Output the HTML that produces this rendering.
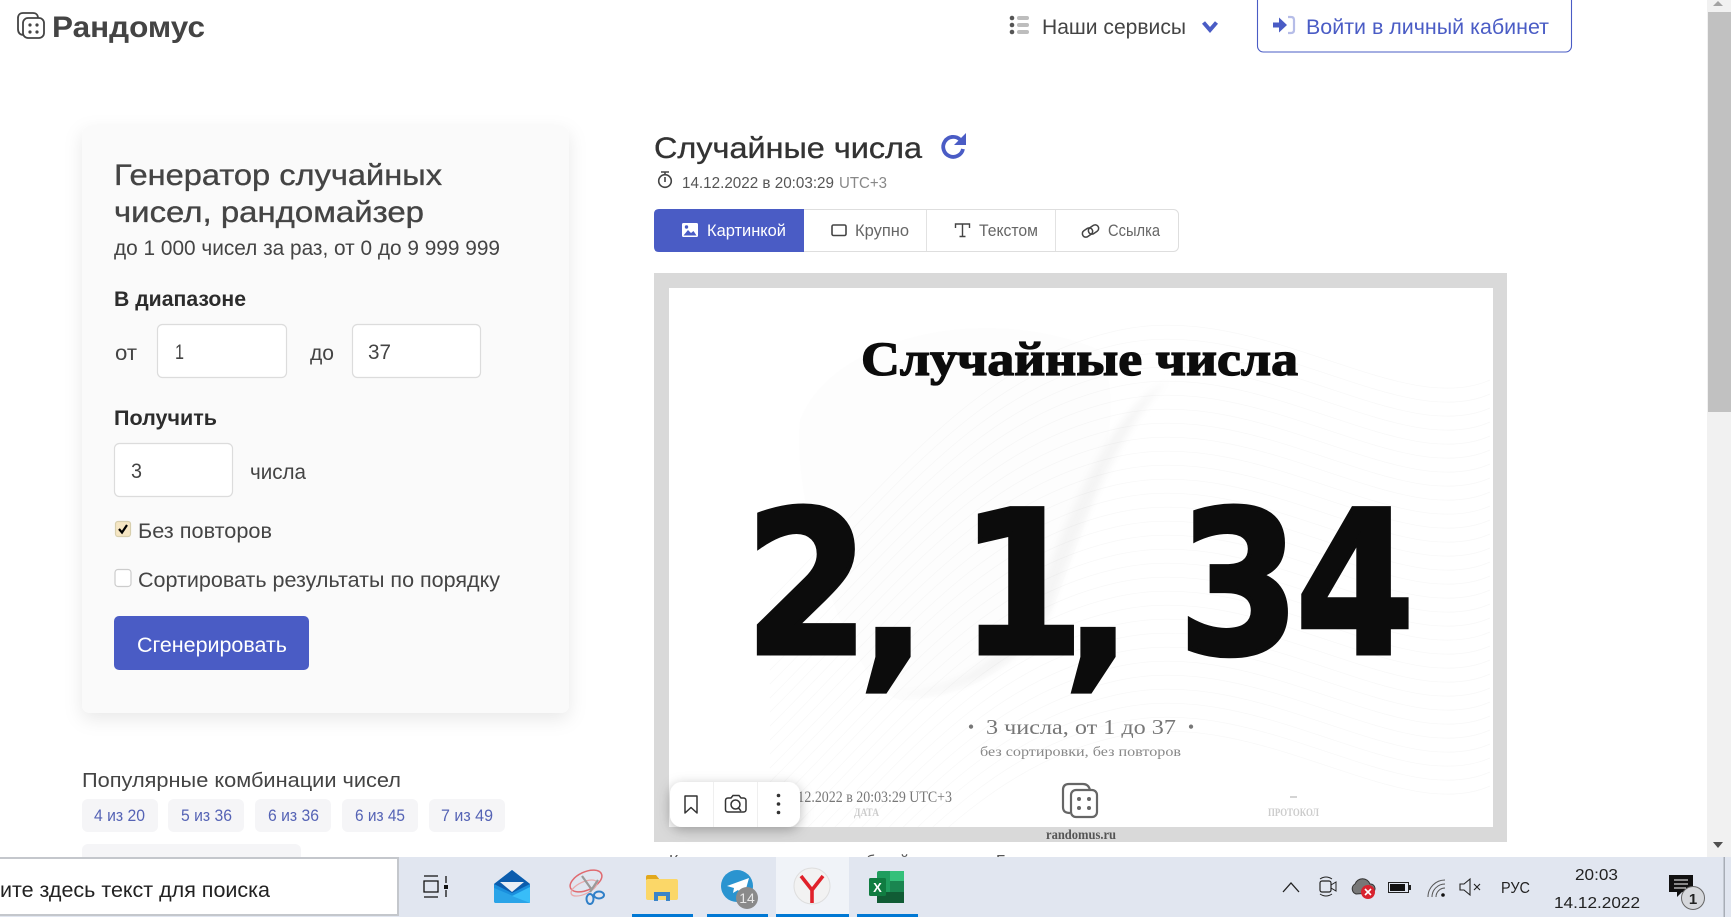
<!DOCTYPE html>
<html lang="ru">
<head>
<meta charset="utf-8">
<title>Рандомус</title>
<style>
html,body{margin:0;padding:0;width:1731px;height:917px;overflow:hidden;background:#fff}
#w{position:relative;width:1731px;height:917px;overflow:hidden}
svg{display:block;position:absolute;left:0;top:0}
text{font-family:"Liberation Sans",sans-serif;fill:#444;font-size:21px;white-space:pre}
.b{font-weight:700}
.h{stroke:#444;stroke-width:.35px}
.sl{font-family:"Liberation Serif",serif;font-weight:700;fill:#0c0c0c;stroke:#0c0c0c;stroke-width:1.300px}
.dg{font-family:"DejaVu Sans",sans-serif;font-weight:700;fill:#0c0c0c;font-size:198px;stroke:#0c0c0c;stroke-width:5px}
.cm{font-family:"DejaVu Sans",sans-serif;font-weight:700;fill:#0c0c0c;font-size:211px}
.sr{font-family:"Liberation Serif",serif}
</style>
</head>
<body>
<div id="w">
<svg width="1731" height="917" viewBox="0 0 1731 917" xmlns="http://www.w3.org/2000/svg">
<defs>
<filter id="sh" x="-15%" y="-15%" width="130%" height="130%"><feDropShadow dx="0" dy="6" stdDeviation="9" flood-color="#000" flood-opacity=".09"/></filter>
<filter id="sh2" x="-20%" y="-30%" width="140%" height="170%"><feDropShadow dx="0" dy="3" stdDeviation="6" flood-color="#000" flood-opacity=".28"/></filter>
<filter id="bl"><feGaussianBlur stdDeviation="4"/></filter>
<path id="w1" d="M770 600C900 470 980 360 1120 330C1260 300 1400 420 1490 380" fill="none" stroke="#000" stroke-opacity=".03" stroke-width=".7"/>
<g id="w5"><use href="#w1"/><use href="#w1" y="14"/><use href="#w1" y="28"/><use href="#w1" y="42"/><use href="#w1" y="56"/></g>
<clipPath id="inner"><rect x="669" y="288" width="824" height="539"/></clipPath>
</defs>

<!-- header -->
<g fill="none" stroke="#444" stroke-width="1.8">
<path d="M24 35C20 35 18 33 18 29V18C18 15 20 13 23 13H33C36 13 38 15 38 18"/>
<rect x="23" y="18" width="21" height="20" rx="5" fill="#fff"/>
</g>
<g fill="#444"><circle cx="30" cy="25" r="1.6"/><circle cx="37" cy="25" r="1.6"/><circle cx="30" cy="32" r="1.6"/><circle cx="37" cy="32" r="1.6"/></g>
<text x="52" y="37" class="b" style="font-size:30px" textLength="153" lengthAdjust="spacingAndGlyphs">Рандомус</text>

<g fill="#555"><circle cx="1012" cy="18" r="2.3"/><circle cx="1012" cy="25" r="2.3"/><circle cx="1012" cy="32" r="2.3"/></g>
<g fill="#bdbdbd"><rect x="1017" y="16" width="12" height="4" rx="2"/><rect x="1017" y="23" width="12" height="4" rx="2"/><rect x="1017" y="30" width="12" height="4" rx="2"/></g>
<text x="1042" y="34" textLength="144" lengthAdjust="spacingAndGlyphs">Наши сервисы</text>
<path d="M1203.500 22.500L1210 30L1216.500 22.500" fill="none" stroke="#4a5cc5" stroke-width="4"/>
<rect x="1257.500" y="-8" width="314" height="60" rx="6" fill="#fff" stroke="#4a5cc5" stroke-width="1.100"/>
<path d="M1273 22.500H1279V17.500L1287 25L1279 32.500V27.500H1273Z" fill="#4a5cc5"/>
<path d="M1288 17H1291C1293 17 1294 18 1294 20V30C1294 32 1293 33 1291 33H1288" fill="none" stroke="#b6bde8" stroke-width="2.200"/>
<text x="1306" y="34" style="fill:#4a5cc5" textLength="243" lengthAdjust="spacingAndGlyphs">Войти в личный кабинет</text>

<!-- scrollbar -->
<rect x="1707" y="0" width="24" height="857" fill="#f1f1f1"/>
<rect x="1708" y="12" width="23" height="400" fill="#c1c1c1"/>
<path d="M1713 6L1718 1L1723 6Z" fill="#a3a3a3"/>
<path d="M1713 842H1723L1718 848Z" fill="#505050"/>

<!-- card -->
<rect x="82" y="126" width="487" height="587" rx="8" fill="#fafafa" filter="url(#sh)"/>
<text x="114" y="185" class="h" style="font-size:30px" textLength="328" lengthAdjust="spacingAndGlyphs">Генератор случайных</text>
<text x="114" y="222" class="h" style="font-size:30px" textLength="310" lengthAdjust="spacingAndGlyphs">чисел, рандомайзер</text>
<text x="114" y="255" textLength="386" lengthAdjust="spacingAndGlyphs">до 1 000 чисел за раз, от 0 до 9 999 999</text>
<text x="114" y="306" class="b" style="fill:#2c2c2c" textLength="132" lengthAdjust="spacingAndGlyphs">В диапазоне</text>
<text x="115" y="360" textLength="22" lengthAdjust="spacingAndGlyphs">от</text>
<rect x="157.500" y="324.500" width="129" height="53" rx="5" fill="#fff" stroke="#dcdcdc" stroke-width="1.200"/>
<text x="175" y="359" textLength="9" lengthAdjust="spacingAndGlyphs">1</text>
<text x="310" y="360" textLength="24" lengthAdjust="spacingAndGlyphs">до</text>
<rect x="352.500" y="324.500" width="128" height="53" rx="5" fill="#fff" stroke="#dcdcdc" stroke-width="1.200"/>
<text x="368" y="359" textLength="23" lengthAdjust="spacingAndGlyphs">37</text>
<text x="114" y="425" class="b" style="fill:#2c2c2c" textLength="103" lengthAdjust="spacingAndGlyphs">Получить</text>
<rect x="114.500" y="443.500" width="118" height="53" rx="5" fill="#fff" stroke="#dcdcdc" stroke-width="1.200"/>
<text x="131" y="478" textLength="11" lengthAdjust="spacingAndGlyphs">3</text>
<text x="250" y="479" textLength="56" lengthAdjust="spacingAndGlyphs">числа</text>
<rect x="115.500" y="521.500" width="15" height="15" rx="2.500" fill="#f6e6c3" stroke="#d8cfae" stroke-width="1.200"/>
<path d="M119 529L122 532.500L127 525" fill="none" stroke="#000" stroke-width="2.200"/>
<text x="138" y="538" textLength="134" lengthAdjust="spacingAndGlyphs">Без повторов</text>
<rect x="115" y="569.500" width="16" height="17" rx="3" fill="#fff" stroke="#ccc" stroke-width="1.200"/>
<text x="138" y="587" textLength="362" lengthAdjust="spacingAndGlyphs">Сортировать результаты по порядку</text>
<rect x="114" y="616" width="195" height="54" rx="5" fill="#4a5cc5"/>
<text x="137" y="652" style="fill:#fff" textLength="150" lengthAdjust="spacingAndGlyphs">Сгенерировать</text>

<!-- popular -->
<text x="82" y="787" style="font-size:20px" textLength="319" lengthAdjust="spacingAndGlyphs">Популярные комбинации чисел</text>
<g fill="#f5f5f7">
<rect x="82" y="799" width="76" height="33" rx="6"/><rect x="168" y="799" width="76" height="33" rx="6"/><rect x="255" y="799" width="76" height="33" rx="6"/><rect x="342" y="799" width="76" height="33" rx="6"/><rect x="429" y="799" width="76" height="33" rx="6"/>
<rect x="82" y="844" width="219" height="20" rx="6"/>
</g>
<text x="94" y="821" style="font-size:17px;fill:#5563b5" textLength="51" lengthAdjust="spacingAndGlyphs">4 из 20</text>
<text x="181" y="821" style="font-size:17px;fill:#5563b5" textLength="51" lengthAdjust="spacingAndGlyphs">5 из 36</text>
<text x="268" y="821" style="font-size:17px;fill:#5563b5" textLength="51" lengthAdjust="spacingAndGlyphs">6 из 36</text>
<text x="355" y="821" style="font-size:17px;fill:#5563b5" textLength="50" lengthAdjust="spacingAndGlyphs">6 из 45</text>
<text x="441" y="821" style="font-size:17px;fill:#5563b5" textLength="52" lengthAdjust="spacingAndGlyphs">7 из 49</text>

<!-- right heading -->
<text x="654" y="158" class="h" style="font-size:30px;fill:#333;stroke:#333" textLength="268" lengthAdjust="spacingAndGlyphs">Случайные числа</text>
<path d="M960 139.500A10 10 0 1 0 963 149" fill="none" stroke="#4a5cc5" stroke-width="3.800"/>
<path d="M966 133V145H954Z" fill="#4a5cc5"/>
<circle cx="665" cy="181" r="6.300" fill="none" stroke="#444" stroke-width="1.600"/>
<path d="M661 172H669M665 172V175M665 177V182" fill="none" stroke="#444" stroke-width="1.600"/>
<text x="682" y="188" style="font-size:15.500px;fill:#555" textLength="152" lengthAdjust="spacingAndGlyphs">14.12.2022 в 20:03:29</text>
<text x="839" y="188" style="font-size:15.500px;fill:#888" textLength="48" lengthAdjust="spacingAndGlyphs">UTC+3</text>

<!-- tabs -->
<rect x="654.500" y="209.500" width="524" height="42" rx="5" fill="#fff" stroke="#dedede" stroke-width="1"/>
<path d="M659 209H804V252H659Q654 252 654 247V214Q654 209 659 209Z" fill="#4a5cc5"/>
<path d="M926.500 210V251M1055.500 210V251" stroke="#e2e2e2" stroke-width="1"/>
<rect x="682" y="223" width="16" height="14" rx="1.500" fill="#fff"/>
<path d="M683.500 235.500L688 230L691 233L693.500 231L696.500 235.500Z" fill="#4a5cc5"/><circle cx="686.500" cy="227" r="1.700" fill="#4a5cc5"/>
<text x="707" y="236" style="font-size:16.500px;fill:#fff" textLength="79" lengthAdjust="spacingAndGlyphs">Картинкой</text>
<rect x="832" y="225" width="14" height="10.500" rx="1.500" fill="none" stroke="#444" stroke-width="1.600"/>
<text x="855" y="236" style="font-size:16.500px;fill:#666" textLength="54" lengthAdjust="spacingAndGlyphs">Крупно</text>
<path d="M955.500 228V224H969.500V228M962.500 224V236.500M959.500 236.500H965.500" fill="none" stroke="#444" stroke-width="1.400"/>
<text x="979" y="236" style="font-size:16.500px;fill:#666" textLength="59" lengthAdjust="spacingAndGlyphs">Текстом</text>
<rect x="1082" y="229" width="11" height="7" rx="3.500" transform="rotate(-35 1087.500 232.500)" fill="none" stroke="#444" stroke-width="1.500"/>
<rect x="1088" y="226" width="11" height="7" rx="3.500" transform="rotate(-35 1093.500 229.500)" fill="none" stroke="#444" stroke-width="1.500"/>
<text x="1108" y="236" style="font-size:16.500px;fill:#666" textLength="52" lengthAdjust="spacingAndGlyphs">Ссылка</text>

<!-- image card -->
<rect x="654" y="273" width="853" height="569" fill="#d9d9d9"/>
<rect x="669" y="288" width="824" height="539" fill="#fff"/>
<g clip-path="url(#inner)">
<path d="M800 420C830 340 980 300 1100 350C1130 420 1090 510 1060 590C1040 650 980 700 900 700C850 690 790 500 800 420Z" fill="#fdfdfd"/>
<path d="M1170 380C1130 410 1080 520 1050 610C1030 660 960 700 890 695C970 690 1010 650 1040 590C1070 510 1110 410 1170 380Z" fill="#f4f4f4" filter="url(#bl)"/>
<use href="#w5"/><use href="#w5" y="70"/><use href="#w5" y="140"/><use href="#w5" y="210"/><use href="#w5" y="280"/><use href="#w5" y="350"/>
</g>
<text x="861" y="375" class="sl" style="font-size:48px" textLength="437" lengthAdjust="spacingAndGlyphs">Случайные числа</text>
<text transform="translate(807,653) scale(.9,1)" class="dg" text-anchor="middle">2</text>
<text transform="translate(893,665) scale(.95,.955)" class="cm" text-anchor="middle">,</text>
<text transform="translate(1022,653) scale(.9,1)" class="dg" text-anchor="middle">1</text>
<text transform="translate(1098,665) scale(.95,.955)" class="cm" text-anchor="middle">,</text>
<text transform="translate(1239,653) scale(.88,1)" class="dg" text-anchor="middle">3</text>
<text transform="translate(1355,653) scale(.86,1)" class="dg" text-anchor="middle">4</text>
<text x="971" y="733" class="sr" text-anchor="middle" style="font-size:18px;fill:#777">•</text>
<text x="1191" y="733" class="sr" text-anchor="middle" style="font-size:18px;fill:#777">•</text>
<text x="986" y="734" class="sr" style="font-size:21px;fill:#777" textLength="190" lengthAdjust="spacingAndGlyphs">3 числа, от 1 до 37</text>
<text x="980" y="756" class="sr" style="font-size:14px;fill:#888" textLength="201" lengthAdjust="spacingAndGlyphs">без сортировки, без повторов</text>
<text x="780" y="802" class="sr" style="font-size:15.500px;fill:#777" textLength="172" lengthAdjust="spacingAndGlyphs">14.12.2022 в 20:03:29 UTC+3</text>
<text x="854" y="816" class="sr b" style="font-size:11.500px;fill:#ccc" textLength="25" lengthAdjust="spacingAndGlyphs">ДАТА</text>
<g fill="none" stroke="#666" stroke-width="2.200">
<path d="M1070 813C1065 813 1063 811 1063 807V790C1063 786 1065 784 1069 784H1083C1087 784 1089 786 1090 790"/>
<rect x="1071" y="790" width="26" height="27" rx="5" fill="#fff"/>
</g>
<g fill="#666"><circle cx="1079" cy="799" r="2"/><circle cx="1089" cy="799" r="2"/><circle cx="1079" cy="808" r="2"/><circle cx="1089" cy="808" r="2"/></g>
<text x="1046" y="839" class="sr b" style="font-size:13.500px;fill:#555" textLength="70" lengthAdjust="spacingAndGlyphs">randomus.ru</text>
<path d="M1290 797H1297" stroke="#aaa" stroke-width="1"/>
<text x="1268" y="816" class="sr b" style="font-size:11.500px;fill:#ccc" textLength="51" lengthAdjust="spacingAndGlyphs">ПРОТОКОЛ</text>

<!-- floating toolbar -->
<rect x="670" y="782" width="130" height="45" rx="12" fill="#fff" filter="url(#sh2)"/>
<path d="M713.500 782V827M757.500 782V827" stroke="#efefef" stroke-width="1"/>
<path d="M685 796H697V813L691 807.500L685 813Z" fill="none" stroke="#333" stroke-width="1.500" stroke-linejoin="round"/>
<path d="M728 798H731L733 795.500H739L741 798H743.500C745 798 746 799 746 800.500V809.500C746 811 745 812 743.500 812H728C726.500 812 725.500 811 725.500 809.500V800.500C725.500 799 726.500 798 728 798Z" fill="none" stroke="#333" stroke-width="1.500"/>
<circle cx="735.500" cy="804.500" r="4.500" fill="none" stroke="#333" stroke-width="1.500"/><path d="M738.500 808L741 811" stroke="#333" stroke-width="1.500"/>
<g fill="#333"><circle cx="778.500" cy="795.500" r="1.800"/><circle cx="778.500" cy="804" r="1.800"/><circle cx="778.500" cy="812.500" r="1.800"/></g>

<!-- clipped text below image -->
<text x="669" y="866" style="font-size:16px;fill:#555">К</text>
<text x="866" y="866" style="font-size:16px;fill:#555">б</text>
<text x="900" y="866" style="font-size:16px;fill:#555">й</text>
<text x="996" y="866" style="font-size:16px;fill:#555">Б</text>

<!-- taskbar -->
<rect x="0" y="857" width="1731" height="60" fill="#e1e6f0"/>
<rect x="776" y="857" width="73" height="60" fill="#f0f3f8"/>
<rect x="-4" y="858" width="402" height="57" fill="#fff" stroke="#c4c7cc" stroke-width="2"/>
<text x="0" y="897" style="font-size:21px;fill:#222" textLength="270" lengthAdjust="spacingAndGlyphs">ите здесь текст для поиска</text>
<!-- task view -->
<path d="M424 876H438M424 881H438V892H424ZM424 897H438M446 876V883M446 890V897" fill="none" stroke="#111" stroke-width="1.300"/><rect x="444" y="885" width="4" height="4" fill="#111"/>
<!-- mail -->
<path d="M494 884L512 870L530 884V901Q530 903 528 903H496Q494 903 494 901Z" fill="#1a8fdd"/>
<path d="M494 884L512 870L530 884L512 893Z" fill="#0b5cad"/>
<path d="M500 882H524L512 892Z" fill="#e8eef5"/>
<path d="M494 888L530 903H496Q494 903 494 901Z" fill="#2aa4e8"/>
<path d="M530 887L512 896L530 903Z" fill="#38bdf8"/>
<!-- snipping -->
<ellipse cx="586" cy="881" rx="17" ry="9" transform="rotate(-25 586 881)" fill="none" stroke="#e06a70" stroke-width="1.500"/>
<ellipse cx="584" cy="888" rx="14" ry="6" transform="rotate(-25 584 888)" fill="none" stroke="#e9a9ab" stroke-width="1.300"/>
<path d="M582 876L592 890M598 880L590 892" stroke="#9a9a9a" stroke-width="2.200"/>
<ellipse cx="590" cy="899" rx="3.500" ry="5" fill="none" stroke="#2f7fc8" stroke-width="2"/>
<ellipse cx="599" cy="895" rx="5" ry="3.500" fill="none" stroke="#2f7fc8" stroke-width="2"/>
<!-- folder -->
<path d="M646 877Q646 875 648 875H656L660 880H646Z" fill="#e2a81c"/>
<rect x="646" y="879" width="32" height="21" rx="2" fill="#fbd768"/>
<path d="M654 901V892H670V901H666V896H658V901Z" fill="#3a85c8"/>
<!-- telegram -->
<circle cx="737" cy="886" r="16" fill="#2a94d0"/>
<path d="M727 886L749 878L744 896L738 890L733 893L734 888Z" fill="#fff"/>
<circle cx="747" cy="898" r="11" fill="#8a8a8a"/>
<text x="747" y="903" text-anchor="middle" style="font-size:14px;fill:#e8e8e8">14</text>
<rect x="632" y="914" width="61" height="3" fill="#0078d4"/><rect x="707" y="914" width="61" height="3" fill="#0078d4"/><rect x="776" y="914" width="73" height="3" fill="#0078d4"/><rect x="857" y="914" width="61" height="3" fill="#0078d4"/>
<!-- yandex -->
<circle cx="812" cy="886" r="18" fill="#f2f2f2" stroke="#dedede"/>
<path d="M801 876L812 890M823 876L812 890M812 889V903" fill="none" stroke="#e0212a" stroke-width="3.600"/>
<!-- excel -->
<rect x="877" y="871" width="27" height="32" rx="2" fill="#1f9d5e"/>
<rect x="890" y="871" width="14" height="10" fill="#34c07a"/><rect x="877" y="892" width="27" height="11" fill="#115c35"/><rect x="890" y="881" width="14" height="11" fill="#1a8550"/>
<rect x="869" y="878" width="17" height="18" rx="1.500" fill="#107c41"/>
<text x="877.500" y="892" text-anchor="middle" class="b" style="font-size:13px;fill:#fff">X</text>
<!-- tray -->
<path d="M1283 892L1291 883L1299 892" fill="none" stroke="#222" stroke-width="1.300"/>
<rect x="1320" y="881" width="11" height="11" rx="2" fill="none" stroke="#222" stroke-width="1.200"/>
<path d="M1331 885L1336 882V891L1331 888M1320 879Q1326 875 1332 879M1320 894Q1326 898 1332 894" fill="none" stroke="#222" stroke-width="1"/>
<path d="M1356 894A5.500 5.500 0 0 1 1355 884A8 8 0 0 1 1370 884A4 4 0 0 1 1371 893Z" fill="#777" stroke="#333" stroke-width="1"/>
<circle cx="1368" cy="892" r="7" fill="#d8232f"/><path d="M1365 889L1371 895M1371 889L1365 895" stroke="#fff" stroke-width="1.600"/>
<rect x="1388.500" y="882.500" width="20" height="10" fill="none" stroke="#222" stroke-width="1"/><rect x="1390" y="884" width="15" height="7" fill="#111"/><rect x="1409" y="885" width="2" height="5" fill="#222"/>
<path d="M1428 897A17 17 0 0 1 1445 880M1432 897A13 13 0 0 1 1445 884M1436 897A9 9 0 0 1 1445 888" fill="none" stroke="#555" stroke-width="1"/><circle cx="1443" cy="895" r="1.800" fill="#111"/>
<path d="M1460 884V890H1464L1470 895V879L1464 884Z" fill="none" stroke="#222" stroke-width="1.100"/><path d="M1474 884L1480 890M1480 884L1474 890" stroke="#222" stroke-width="1.100"/>
<text x="1501" y="893" style="font-size:16px;fill:#222" textLength="29" lengthAdjust="spacingAndGlyphs">РУС</text>
<text x="1575" y="880" style="font-size:16px;fill:#222" textLength="43" lengthAdjust="spacingAndGlyphs">20:03</text>
<text x="1554" y="908" style="font-size:16px;fill:#222" textLength="86" lengthAdjust="spacingAndGlyphs">14.12.2022</text>
<path d="M1669 875H1693V892H1682L1677 897V892H1669Z" fill="#111"/>
<path d="M1674 880H1688M1674 884H1688M1674 888H1686" stroke="#fff" stroke-width="1"/>
<circle cx="1693" cy="898" r="11.500" fill="#d6d8dc" stroke="#666" stroke-width="1"/>
<text x="1693" y="904" text-anchor="middle" class="b" style="font-size:15px;fill:#222">1</text>
<rect x="1723.500" y="857" width="1.500" height="60" fill="#a8adb6"/>
</svg>
</div>
</body>
</html>
